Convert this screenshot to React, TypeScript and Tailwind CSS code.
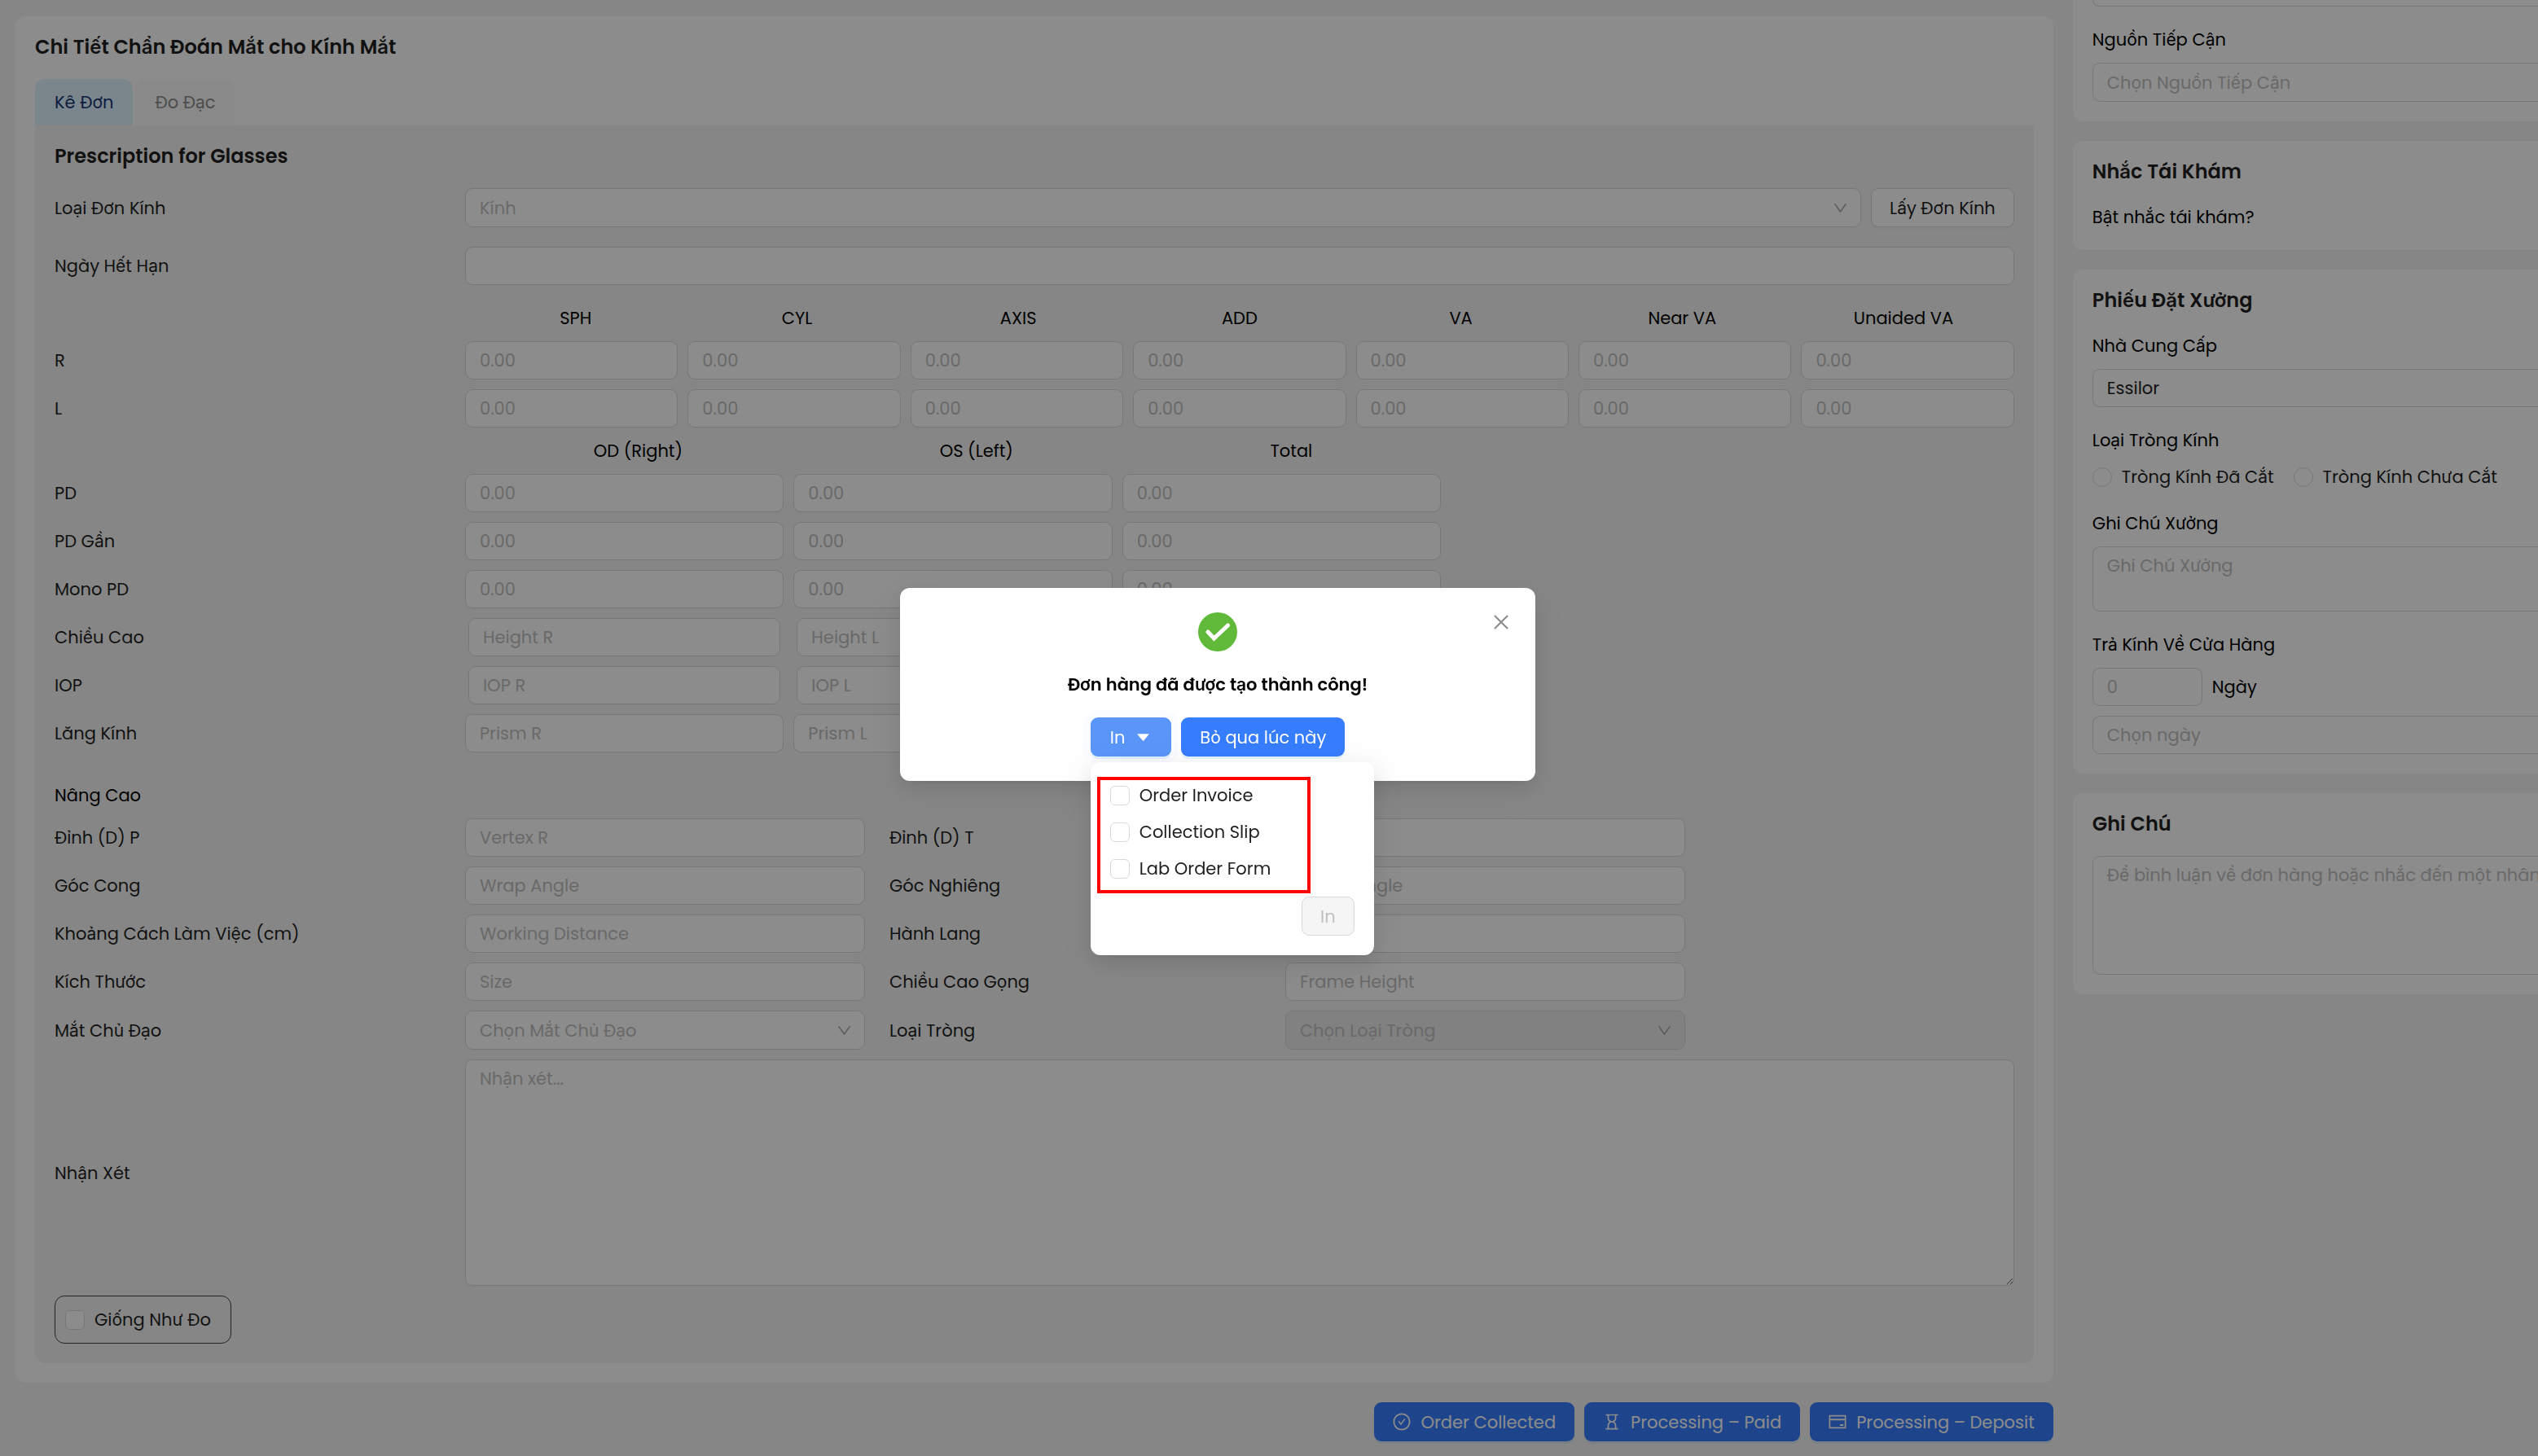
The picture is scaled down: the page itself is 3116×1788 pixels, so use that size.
import { useState, type ReactNode } from "react";
import clsx from "clsx";
import {
  AiOutlineCheckCircle,
  AiOutlineClose,
  AiOutlineCreditCard,
  AiOutlineDown,
  AiOutlineHourglass,
  AiFillCaretDown,
} from "react-icons/ai";

const control =
  "block w-full min-w-0 rounded-[9px] border border-[#d9d9d9] bg-white px-[17px] text-[#1f1f1f] placeholder:text-[#bfbfbf]";

const eyeColumns = ["SPH", "CYL", "AXIS", "ADD", "VA", "Near VA", "Unaided VA"];

const pdRows = [
  { label: "PD", placeholders: ["0.00", "0.00", "0.00"] },
  { label: "PD Gần", placeholders: ["0.00", "0.00", "0.00"] },
  { label: "Mono PD", placeholders: ["0.00", "0.00", "0.00"] },
  { label: "Chiều Cao", placeholders: ["Height R", "Height L"], inset: true },
  { label: "IOP", placeholders: ["IOP R", "IOP L"], inset: true },
  { label: "Lăng Kính", placeholders: ["Prism R", "Prism L"] },
];

const advancedRows = [
  [
    { label: "Đỉnh (D) P", placeholder: "Vertex R" },
    { label: "Đỉnh (D) T", placeholder: "Vertex L" },
  ],
  [
    { label: "Góc Cong", placeholder: "Wrap Angle" },
    { label: "Góc Nghiêng", placeholder: "Panto Angle" },
  ],
  [
    { label: "Khoảng Cách Làm Việc (cm)", placeholder: "Working Distance" },
    { label: "Hành Lang", placeholder: "Corridor" },
  ],
  [
    { label: "Kích Thước", placeholder: "Size" },
    { label: "Chiều Cao Gọng", placeholder: "Frame Height" },
  ],
];

const printOptions = ["Order Invoice", "Collection Slip", "Lab Order Form"];

function Input({
  id,
  label,
  placeholder,
  className,
}: {
  id?: string;
  label?: string;
  placeholder?: string;
  className?: string;
}) {
  return (
    <input
      id={id}
      type="text"
      aria-label={label}
      placeholder={placeholder}
      className={clsx(control, "h-[47px]", className)}
    />
  );
}

function Select({
  id,
  placeholder,
  disabled,
}: {
  id: string;
  placeholder: string;
  disabled?: boolean;
}) {
  return (
    <div className="relative min-w-0 flex-1">
      <select
        id={id}
        disabled={disabled}
        className={clsx(
          "block h-12 w-full appearance-none rounded-[9px] border border-[#d9d9d9] px-[17px] text-[#bfbfbf]",
          disabled ? "bg-[#ebebeb]" : "bg-white"
        )}
      >
        <option>{placeholder}</option>
      </select>
      <AiOutlineDown className="pointer-events-none absolute top-3.5 right-[15px] size-[21px] text-[#a6a6a6]" />
    </div>
  );
}

function Row({
  id,
  label,
  children,
}: {
  id?: string;
  label: string;
  children: ReactNode;
}) {
  return (
    <div className="grid grid-cols-[504fr_1902fr] items-center">
      <label htmlFor={id}>{label}</label>
      {children}
    </div>
  );
}

function Checkbox({ label }: { label: string }) {
  return (
    <label className="flex items-center gap-3">
      <input
        type="checkbox"
        className="size-6 shrink-0 appearance-none rounded-md border border-[#d9d9d9] bg-white checked:bg-[#377dff]"
      />
      {label}
    </label>
  );
}

function PrescriptionPanel() {
  return (
    <section className="rounded-b-xl bg-[#f5f5f5] px-6 pt-5 pb-6">
      <h2 className="text-2xl leading-9 font-semibold">Prescription for Glasses</h2>

      <div className="mt-[21px] flex flex-col gap-6">
        <Row id="rx-type" label="Loại Đơn Kính">
          <div className="flex gap-3">
            <Select id="rx-type" placeholder="Kính" />
            <button className="h-12 rounded-[9px] border border-[#d9d9d9] bg-white px-[22px] shadow-[0_3px_0_rgba(0,0,0,0.02)]">
              Lấy Đơn Kính
            </button>
          </div>
        </Row>
        <Row id="expiry" label="Ngày Hết Hạn">
          <Input id="expiry" />
        </Row>
      </div>

      <div className="mt-6 grid grid-cols-[504fr_1902fr] text-black">
        <div className="col-start-2 grid grid-cols-7 text-center">
          {eyeColumns.map((name) => (
            <span key={name}>{name}</span>
          ))}
        </div>
      </div>
      <div className="mt-3 flex flex-col gap-3">
        {["R", "L"].map((eye) => (
          <Row key={eye} id={`${eye}-SPH`} label={eye}>
            <div className="grid grid-cols-7 gap-3">
              {eyeColumns.map((name) => (
                <Input
                  key={name}
                  id={`${eye}-${name}`}
                  label={`${eye} ${name}`}
                  placeholder="0.00"
                />
              ))}
            </div>
          </Row>
        ))}
      </div>

      <div className="mt-3 grid grid-cols-[504fr_1902fr] text-black">
        <div className="col-start-2 flex w-[63%] justify-around">
          <span>OD (Right)</span>
          <span>OS (Left)</span>
          <span>Total</span>
        </div>
      </div>
      <div className="mt-3 flex flex-col gap-3">
        {pdRows.map((row) => (
          <Row key={row.label} id={`${row.label}-0`} label={row.label}>
            <div className="grid w-[63%] grid-cols-3 gap-3">
              {row.placeholders.map((placeholder, i) => (
                <div key={i} className={row.inset ? "px-1" : undefined}>
                  <Input
                    id={`${row.label}-${i}`}
                    label={`${row.label} ${i + 1}`}
                    placeholder={placeholder}
                  />
                </div>
              ))}
            </div>
          </Row>
        ))}
      </div>

      <h3 className="mt-9 text-black">Nâng Cao</h3>
      <div className="mt-3 flex flex-col gap-3">
        {advancedRows.map(([left, right]) => (
          <div
            key={left.label}
            className="grid grid-cols-[504fr_491fr_516fr_491fr_404fr] items-center"
          >
            <label htmlFor={left.placeholder}>{left.label}</label>
            <Input id={left.placeholder} placeholder={left.placeholder} />
            <label htmlFor={right.placeholder} className="pl-[30px]">
              {right.label}
            </label>
            <Input id={right.placeholder} placeholder={right.placeholder} />
          </div>
        ))}
        <div className="grid grid-cols-[504fr_491fr_516fr_491fr_404fr] items-center">
          <label htmlFor="dominant-eye">Mắt Chủ Đạo</label>
          <Select id="dominant-eye" placeholder="Chọn Mắt Chủ Đạo" />
          <label htmlFor="lens-type" className="pl-[30px]">
            Loại Tròng
          </label>
          <Select id="lens-type" placeholder="Chọn Loại Tròng" disabled />
        </div>
        <Row id="remarks" label="Nhận Xét">
          <textarea
            id="remarks"
            placeholder="Nhận xét..."
            className={clsx(control, "h-[278px] resize-y py-1.5")}
          />
        </Row>
        <div className="flex h-[59px] w-fit items-center rounded-xl border border-[#434343] pr-6 pl-3">
          <Checkbox label="Giống Như Đo" />
        </div>
      </div>
    </section>
  );
}

function SideCard({ title, children }: { title: string; children: ReactNode }) {
  return (
    <section className="rounded-l-xl bg-white pt-5 pb-6 pl-6">
      <h2 className="text-2xl leading-9 font-semibold text-[#1f1f1f]">{title}</h2>
      {children}
    </section>
  );
}

function Sidebar() {
  return (
    <aside className="flex min-w-0 flex-col gap-6 text-black">
      <section className="rounded-bl-xl bg-white pb-6 pl-6">
        <div className="h-2 rounded-bl-[9px] border-b border-l border-[#d9d9d9]" />
        <label htmlFor="source" className="mt-6 block">
          Nguồn Tiếp Cận
        </label>
        <input
          id="source"
          type="text"
          placeholder="Chọn Nguồn Tiếp Cận"
          className={clsx(control, "mt-3 h-12 rounded-r-none border-r-0")}
        />
      </section>

      <SideCard title="Nhắc Tái Khám">
        <p className="mt-[21px]">Bật nhắc tái khám?</p>
      </SideCard>

      <SideCard title="Phiếu Đặt Xưởng">
        <label htmlFor="supplier" className="mt-[21px] block">
          Nhà Cung Cấp
        </label>
        <input
          id="supplier"
          type="text"
          defaultValue="Essilor"
          className={clsx(control, "mt-3 h-[47px] rounded-r-none border-r-0")}
        />
        <fieldset className="mt-6">
          <legend>Loại Tròng Kính</legend>
          <div className="mt-3 flex gap-6 whitespace-nowrap text-[#1f1f1f]">
            {["Tròng Kính Đã Cắt", "Tròng Kính Chưa Cắt"].map((option) => (
              <label key={option} className="flex items-center gap-3">
                <input
                  type="radio"
                  name="lens-cut"
                  className="size-6 shrink-0 appearance-none rounded-full border border-[#d9d9d9] bg-white checked:bg-[#377dff]"
                />
                {option}
              </label>
            ))}
          </div>
        </fieldset>
        <label htmlFor="lab-note" className="mt-6 block">
          Ghi Chú Xưởng
        </label>
        <textarea
          id="lab-note"
          placeholder="Ghi Chú Xưởng"
          className={clsx(control, "mt-3 h-20 resize-none rounded-r-none border-r-0 py-1.5")}
        />
        <label htmlFor="return-days" className="mt-6 block">
          Trả Kính Về Cửa Hàng
        </label>
        <div className="mt-3 flex items-center gap-3">
          <Input id="return-days" placeholder="0" className="max-w-[135px]" />
          <span>Ngày</span>
        </div>
        <input
          type="text"
          aria-label="Chọn ngày"
          placeholder="Chọn ngày"
          className={clsx(control, "mt-3 h-[47px] rounded-r-none border-r-0")}
        />
      </SideCard>

      <SideCard title="Ghi Chú">
        <textarea
          aria-label="Ghi Chú"
          placeholder="Để bình luận về đơn hàng hoặc nhắc đến một nhân"
          className={clsx(
            control,
            "mt-[21px] h-[146px] resize-none overflow-hidden rounded-r-none border-r-0 py-1.5 pr-0 whitespace-pre"
          )}
        />
      </SideCard>
    </aside>
  );
}

function PrintMenu() {
  return (
    <div className="absolute top-[55px] left-0 w-[348px] rounded-xl bg-white px-2 pt-[18px] pb-6 text-[#1f1f1f] shadow-[0_9px_24px_rgba(0,0,0,0.08),0_4px_9px_-6px_rgba(0,0,0,0.12),0_13px_42px_12px_rgba(0,0,0,0.05)]">
      <div className="flex h-[143px] w-[262px] flex-col gap-3 border-4 border-[#ff0000] px-3 pt-0.5">
        {printOptions.map((option) => (
          <Checkbox key={option} label={option} />
        ))}
      </div>
      <div className="mt-1 mr-4 flex justify-end">
        <button
          disabled
          className="h-12 rounded-[9px] border border-[#d9d9d9] bg-[#f5f5f5] px-[22px] text-[#bfbfbf]"
        >
          In
        </button>
      </div>
    </div>
  );
}

function SuccessModal({ onClose }: { onClose: () => void }) {
  const [menuOpen, setMenuOpen] = useState(true);

  return (
    <div className="fixed inset-0 flex items-start justify-center bg-black/45 pt-[722px] pr-[126px]">
      <div
        role="dialog"
        aria-labelledby="dialog-title"
        className="relative flex w-[780px] flex-col items-center rounded-xl bg-white pt-[30px] pb-[30px] shadow-[0_9px_24px_rgba(0,0,0,0.08),0_4px_9px_-6px_rgba(0,0,0,0.12),0_13px_42px_12px_rgba(0,0,0,0.05)]"
      >
        <button
          aria-label="Close"
          onClick={onClose}
          className="absolute top-[29px] right-[29px] text-[#8c8c8c]"
        >
          <AiOutlineClose className="size-[26px]" />
        </button>
        <svg viewBox="0 0 48 48" className="size-12">
          <circle cx="24" cy="24" r="24" fill="#60b939" />
          <path
            d="M12 24L19.500 32L36.500 16"
            fill="none"
            stroke="#fff"
            strokeWidth="5"
            strokeLinecap="round"
          />
        </svg>
        <p id="dialog-title" className="mt-6 font-semibold text-black">
          Đơn hàng đã được tạo thành công!
        </p>
        <div className="relative mt-6 flex gap-3 text-white">
          <button
            onClick={() => setMenuOpen(!menuOpen)}
            className="flex h-12 items-center gap-3 rounded-[9px] bg-[#5a96fa] px-6 shadow-[0_3px_0_rgba(5,145,255,0.1),0_0_0_9px_rgba(55,125,255,0.02)]"
          >
            In
            <AiFillCaretDown className="size-[21px]" />
          </button>
          <button
            onClick={onClose}
            className="h-12 rounded-[9px] bg-[#377dff] px-[23px] shadow-[0_3px_0_rgba(5,145,255,0.1)]"
          >
            Bỏ qua lúc này
          </button>
          {menuOpen && <PrintMenu />}
        </div>
      </div>
    </div>
  );
}

export default function App() {
  const [modalOpen, setModalOpen] = useState(true);

  const actions = [
    { label: "Order Collected", icon: AiOutlineCheckCircle },
    { label: "Processing – Paid", icon: AiOutlineHourglass },
    { label: "Processing – Deposit", icon: AiOutlineCreditCard },
  ];

  return (
    <div className="min-h-screen overflow-hidden bg-[#f5f5f5] font-['Poppins','Inter',sans-serif] text-[21px] leading-[33px] text-[#1f1f1f]">
      <div className="grid grid-cols-[2501fr_571fr] gap-x-6 pl-[19px]">
        <main className="min-w-0 pt-5">
          <div className="rounded-xl bg-white px-6 pt-5 pb-6">
            <h1 className="text-2xl leading-9 font-semibold">
              Chi Tiết Chẩn Đoán Mắt cho Kính Mắt
            </h1>
            <div role="tablist" className="mt-[21px] flex gap-[3px]">
              <button
                role="tab"
                aria-selected="true"
                className="h-[57px] rounded-t-xl bg-[#def2ff] px-6 text-[#143575]"
              >
                Kê Đơn
              </button>
              <button
                role="tab"
                aria-selected="false"
                className="h-[57px] rounded-t-xl bg-[#fafafa] px-6 text-[#8c8c8c]"
              >
                Đo Đạc
              </button>
            </div>
            <PrescriptionPanel />
          </div>
          <div className="mt-6 flex justify-end gap-3 text-white">
            {actions.map(({ label, icon: Icon }) => (
              <button
                key={label}
                className="flex h-12 items-center gap-[11px] rounded-[9px] bg-[#377dff] pr-[23px] pl-[22px] shadow-[0_3px_0_rgba(5,145,255,0.1)]"
              >
                <Icon className="size-6" />
                {label}
              </button>
            ))}
          </div>
        </main>
        <Sidebar />
      </div>
      {modalOpen && <SuccessModal onClose={() => setModalOpen(false)} />}
    </div>
  );
}
